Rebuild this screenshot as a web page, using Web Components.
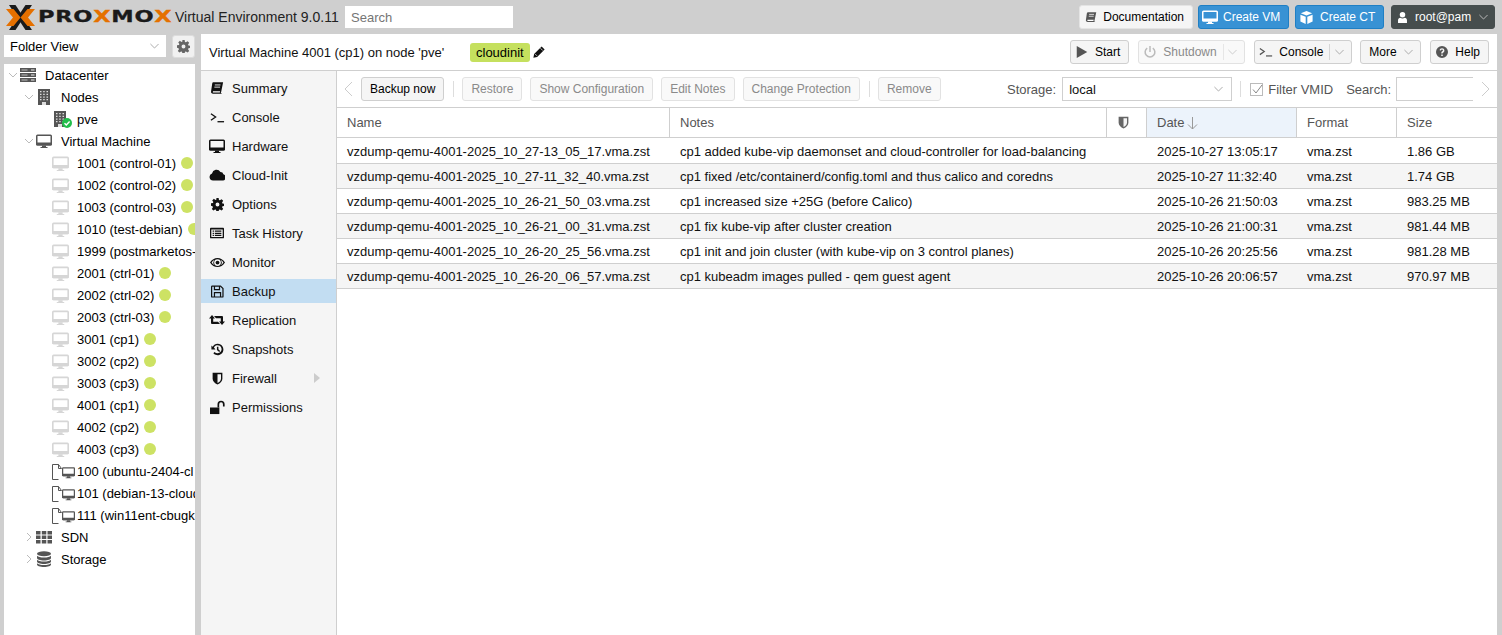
<!DOCTYPE html>
<html>
<head>
<meta charset="utf-8">
<title>Proxmox VE</title>
<style>
  html, body { margin: 0; height: 100%; overflow: hidden; }
  body { background: #cfcfcf; font: 13px "Liberation Sans", Arial, sans-serif; color: #000; }
</style>
</head>
<body>
<pve-app></pve-app>
<script>
const ICONS = {
  book: '<path d="M4 1.500h11l-2.200 10.800-.5 1.200 1.400 1H3.500C1.800 14.500 1 13.500 1.200 12L2.500 3C2.700 2 3.200 1.500 4 1.500z"/><path d="M3.400 11.800h8.200l-.4 1.400H3.200z" fill="#fff"/><path d="M5.500 4.500h6.500M5 7h6.500" stroke="#fff" fill="none"/>',
  term: '<path d="M1 4l5 3.500-5 3.500" fill="none" stroke="currentColor" stroke-width="1.400"/><path d="M8 12.500h7" stroke="currentColor" stroke-width="1.400"/>',
  desktop: '<path d="M1.500 1.500h13A1.500 1.500 0 0 1 16 3v8a1.500 1.500 0 0 1-1.500 1.500h-13A1.500 1.500 0 0 1 0 11V3a1.500 1.500 0 0 1 1.500-1.500zM1.500 3v7.500h13V3z" fill-rule="evenodd"/><path d="M0 9.500h16V11a1.500 1.500 0 0 1-1.500 1.500h-13A1.500 1.500 0 0 1 0 11z"/><path d="M6 12.500h4v1.500h1.500v1h-7v-1H6z"/>',
  cloud: '<path d="M4 13.500a3.600 3.600 0 0 1-1-7 4.600 4.600 0 0 1 8.400-1.600 3 3 0 0 1 3 2.400 3.200 3.200 0 0 1-.4 6.200z"/>',
  gear: '<path fill-rule="evenodd" d="M6.600 0h2.800l.4 2.400 1.200.5 2-1.400 2 2-1.400 2 .5 1.200 2.400.4v2.800l-2.400.4-.5 1.200 1.400 2-2 2-2-1.400-1.200.5-.4 2.400H6.600l-.4-2.400-1.200-.5-2 1.400-2-2 1.400-2-.5-1.200L0 9.400V6.600l2.400-.4.5-1.200-1.400-2 2-2 2 1.400 1.200-.5zM8 5.600a2.400 2.400 0 1 0 0 4.800 2.400 2.400 0 0 0 0-4.800z"/>',
  list: '<path fill-rule="evenodd" d="M1 2h14a1 1 0 0 1 1 1v10a1 1 0 0 1-1 1H1a1 1 0 0 1-1-1V3a1 1 0 0 1 1-1zm.500 2v8.500h13V4z"/><path d="M3 5.200h1.500v1.400H3zM3 7.600h1.500v1.400H3zM3 10h1.500v1.400H3zM5.500 5.200H13v1.400H5.500zM5.500 7.600H13v1.400H5.500zM5.500 10H13v1.400H5.500z"/>',
  eye: '<path fill-rule="evenodd" d="M0 8c2-3.200 4.800-4.800 8-4.800S14 4.800 16 8c-2 3.200-4.800 4.800-8 4.800S2 11.200 0 8zm8-3.600a3.600 3.600 0 1 0 0 7.200 3.600 3.600 0 0 0 0-7.200zM1.700 8c.8 1.200 1.700 2 2.700 2.700A5 5 0 0 1 4.400 5.300C3.400 6 2.500 6.800 1.700 8zm10-2.700a5 5 0 0 1 0 5.400c1-.7 1.900-1.500 2.600-2.700-.7-1.200-1.600-2-2.600-2.700z"/><circle cx="8" cy="8" r="2"/>',
  save: '<path fill-rule="evenodd" d="M1.500 0.500h10.500l3.500 3.500v10a1.500 1.500 0 0 1-1.500 1.500H1.500A1.500 1.500 0 0 1 0 14V2a1.500 1.500 0 0 1 1.500-1.500zm0 1.500V14h12.500V4.700L11.500 2h-.3v4.500H3.500V2zm3.500 0v3h4.700V2zM3.500 8.500h9V14H11V10H5v4H3.500z"/>',
  retweet: '<path d="M0 6.500L3 3l3 3.500H4.200v3.300H9l2 2.200H3a1 1 0 0 1-1-1V6.500z"/><path d="M16 9.500L13 13l-3-3.500h1.800V6.200H7L5 4h8a1 1 0 0 1 1 1v4.500z"/>',
  history: '<path d="M8.300 1a7 7 0 1 1-5.400 11.500l1.500-1.400a5 5 0 1 0-.8-5.700L5.500 8H.5V3l1.600 1.600A7 7 0 0 1 8.300 1z"/><path d="M7.300 4.500h1.800v3.300l2.200 2-1.200 1.300-2.800-2.600z"/>',
  shield: '<path d="M2 1h12v7c0 3.500-2.500 5.800-6 7.500C4.500 13.800 2 11.500 2 8z"/><path d="M8 2.800h4.300V8c0 2.600-1.800 4.300-4.300 5.600z" fill="#f5f5f5"/>',
  unlock: '<path d="M0 8h10v7H0z"/><path d="M7 8V4.500a3.800 3.800 0 0 1 7.600 0V7h-1.800V4.500a2 2 0 0 0-4 0V8z" transform="translate(1 0)"/>',
  question: '<path fill-rule="evenodd" d="M8 0a8 8 0 1 1 0 16A8 8 0 0 1 8 0zM7 11.300v2h2v-2zM8 3c-1.800 0-3 1-3.200 2.700l1.800.3c.1-.8.600-1.300 1.400-1.300s1.300.4 1.300 1.100c0 .5-.3.800-1 1.300-.9.600-1.300 1.200-1.300 2.200v.7h1.900v-.3c0-.5.200-.7.900-1.200 1-.7 1.400-1.400 1.400-2.300C11 4.100 9.800 3 8 3z"/>',
  cube: '<path d="M8 0l7 2.800L8 5.600 1 2.800z"/><path d="M.5 4.500l6.500 2.600V16l-6.500-3zM15.500 4.500L9 7.100V16l6.500-3z"/>',
  user: '<circle cx="8" cy="4" r="4"/><path d="M1.500 16v-4c0-2 1.500-3.500 3.300-3.500.9.700 2 1 3.200 1s2.300-.3 3.200-1c1.800 0 3.300 1.500 3.300 3.500v4z"/>',
  play: '<path d="M1 0l14 8-14 8z"/>',
  power: '<path d="M8 0v8" fill="none" stroke="currentColor" stroke-width="2"/><path d="M4.300 2.800a6.500 6.500 0 1 0 7.400 0" fill="none" stroke="currentColor" stroke-width="2"/>',
  pencil: '<path d="M11.500.5l4 4-10 10-5 1 1-5z"/><path d="M3 10.800l2.200 2.200" stroke="#fff"/><path d="M10 3l3 3" stroke="#fff"/>',
  server: '<path d="M0 1h16v4H0zM0 6h16v4H0zM0 11h16v4H0z"/><path d="M1.500 2.500h6v1h-6zM1.500 7.500h6v1h-6zM1.500 12.500h6v1h-6z" fill="#bbb"/><path d="M11 2.500h3.500v1H11zM11 7.500h3.500v1H11zM11 12.500h3.500v1H11z" fill="#eee"/>',
  building: '<path d="M2 0h12v16H2z" fill="#555"/><path d="M4 2h1.500v1.300H4zM7.200 2h1.500v1.300H7.200zM10.500 2H12v1.300h-1.500zM4 4.700h1.500V6H4zM7.200 4.700h1.500V6H7.200zM10.500 4.700H12V6h-1.500zM4 7.400h1.500v1.300H4zM7.200 7.400h1.500v1.300H7.200zM10.500 7.400H12v1.300h-1.500zM4 10h1.500v1.300H4zM7.200 10h1.500v1.300H7.200zM10.500 10H12v1.300h-1.500zM6 13h4v3H6z" fill="#ddd"/>',
  grid: '<path d="M0 2h4.500v3.500H0zM5.800 2h4.500v3.500H5.800zM11.500 2H16v3.500h-4.500zM0 6.500h4.500V10H0zM5.800 6.500h4.500V10H5.800zM11.500 6.500H16V10h-4.500zM0 11h4.500v3.500H0zM5.800 11h4.500v3.500H5.800zM11.500 11H16v3.500h-4.500z"/>',
  database: '<ellipse cx="8" cy="2.800" rx="7" ry="2.500"/><path d="M1 4.700c1 1.200 3.500 1.800 7 1.800s6-.6 7-1.800V7c0 1.400-3 2.500-7 2.500S1 8.400 1 7z"/><path d="M1 8.700c1 1.200 3.500 1.800 7 1.800s6-.6 7-1.800V10.500c0 1.400-3 2.500-7 2.500s-7-1.100-7-2.500z"/><path d="M1 12.200c1 1.200 3.500 1.800 7 1.800s6-.6 7-1.800V13.500c0 1.400-3 2.500-7 2.500s-7-1.100-7-2.500z"/>'
};

function svg(name, size, color) {
  return `<svg viewBox="0 0 16 16" width="${size}" height="${size}" fill="${color || 'currentColor'}" style="color:${color || 'currentColor'};display:block;flex:none">${ICONS[name]}</svg>`;
}
const chevDown = (c, cls) => `<svg class="${cls || ''}" viewBox="0 0 11 7" width="9" height="6" style="display:block;flex:none"><path d="M.5 1l5 5 5-5" fill="none" stroke="${c || '#999'}" stroke-width="1.200"/></svg>`;

class PveBtn extends HTMLElement {
  connectedCallback() {
    const icon = this.getAttribute('icon');
    const size = this.getAttribute('size') || 14;
    const split = this.hasAttribute('split');
    const arrow = this.hasAttribute('arrow');
    const off = this.hasAttribute('off');
    const kind = this.getAttribute('kind') || '';
    const iconColor = { blue: '#fff', dark: '#fff' }[kind] || (off ? '#bbb' : '#555');
    this.attachShadow({ mode: 'open' });
    this.shadowRoot.innerHTML = `
      <style>
        :host { display: inline-flex; box-sizing: border-box; height: 24px; align-items: center; border: 1px solid #cfcfcf; border-radius: 3px; background: #f5f5f5; color: #000; padding: 0 var(--pr, 8px) 0 var(--pl, 8px); font-size: 12px; white-space: nowrap; flex: none; }
        :host([off]) { color: #8a8a8a; border-color: #e2e2e2; background: #f9f9f9; }
        :host([kind=blue]) { background: #3892d4; border-color: #1f7fc4; color: #fff; }
        :host([kind=dark]) { background: #464d4d; border-color: #464d4d; color: #fff; }
        :host([kind=plain]) { border-color: #e4e4e4; background: #f5f5f5; }
        .ic { margin-right: var(--ig, 6px); flex: none; display: block; }
        .sep { width: 1px; height: 16px; background: #d6d6d6; margin-left: 6px; margin-right: -1px; }
        :host([off]) .sep { background: #e6e6e6; }
        .ch { margin-left: var(--cg, 6px); }
      </style>
      ${icon ? `<span class="ic">${svg(icon, size, iconColor)}</span>` : ''}<span><slot></slot></span>${split ? '<i class="sep"></i>' : ''}${split || arrow ? chevDown(kind === 'dark' ? '#bbb' : (off ? '#ccc' : '#aaa'), 'ch') : ''}
    `;
  }
}
customElements.define('pve-btn', PveBtn);

class PveHeader extends HTMLElement {
  connectedCallback() {
    this.attachShadow({ mode: 'open' });
    this.shadowRoot.innerHTML = `
      <style>
        :host { display: flex; align-items: center; height: 34px; box-sizing: border-box; padding: 0 7px 0 5px; flex: none; }
        .logo { width: 165px; height: 27px; flex: none; display: flex; align-items: center; }
        .word { font: bold 15px "DejaVu Sans", sans-serif; color: #1a1a1a; transform: scaleX(1.5); transform-origin: left center; letter-spacing: .5px; margin-left: 3px; white-space: nowrap; -webkit-text-stroke: .3px currentColor; }
        .word b { color: #e57000; }
        .ver { font-size: 14px; color: #222; margin-left: 5px; width: 170px; white-space: nowrap; }
        .search { width: 168px; height: 22px; background: #fff; box-sizing: border-box; color: #757575; padding: 0 6px; line-height: 23px; font-size: 13px; flex: none; }
        .right { margin-left: auto; display: flex; }
      </style>
      <div class="logo">
        <svg width="29" height="25" viewBox="0 0 29 25" style="flex:none;margin-left:1px">
          <path d="M3 0h6.500L26 25h-6.500z" fill="#1a1a1a"/>
          <path d="M26 0h-6.500L3 25h6.500z" fill="#1a1a1a"/>
          <path d="M0 4h7.500l7 8.500-7 8.500H0l7-8.500z" fill="#e57000"/>
          <path d="M29 4h-7.500l-7 8.500 7 8.500H29l-7-8.500z" fill="#e57000"/>
        </svg>
        <span class="word">PRO<b>X</b>MO<b>X</b></span>
      </div>
      <span class="ver">Virtual Environment 9.0.11</span>
      <div class="search">Search</div>
      <div class="right">
        <pve-btn icon="book" size="12" kind="plain" style="--pl:5px;--pr:8px;--ig:6px">Documentation</pve-btn>
        <pve-btn icon="desktop" size="16" kind="blue" style="margin-left:5px;--pl:3px;--pr:6px;--ig:5px;width:91px">Create VM</pve-btn>
        <pve-btn icon="cube" size="13" kind="blue" style="margin-left:6px;--pl:4px;--pr:6px;--ig:7px;width:89px">Create CT</pve-btn>
        <pve-btn icon="user" size="11" kind="dark" arrow style="margin-left:7px;--pl:5px;--pr:4px;--ig:7px;--cg:8px;width:104px">root@pam</pve-btn>
      </div>
    `;
  }
}
customElements.define('pve-header', PveHeader);

class PveNode extends HTMLElement {
  connectedCallback() {
    const depth = +this.getAttribute('depth');
    const twist = this.getAttribute('twist');
    const icon = this.getAttribute('icon');
    const gap = this.getAttribute('gap') || '10';
    const dot = this.hasAttribute('dot');
    const pad = 4 + depth * 16 + (depth === 2 ? 1 : 0);
    let iconHtml = '';
    if (icon === 'vm') {
      iconHtml = svg('desktop', 17, '#d6d6d6');
    } else if (icon === 'node') {
      iconHtml = `<span class="ov">${svg('building', 16, '#555')}<svg class="ok" viewBox="0 0 10 10" width="10" height="10"><circle cx="5" cy="5" r="5" fill="#21bf4b"/><path d="M2.500 5.200l1.800 1.800 3.300-3.500" fill="none" stroke="#fff" stroke-width="1.400"/></svg></span>`;
    } else if (icon === 'tpl') {
      iconHtml = `<span class="ov tpl"><svg viewBox="0 0 12 16" width="12" height="16" fill="none" stroke="#555" style="display:block"><path d="M.5 15.500V.5h6l3 4"/><path d="M6.500.5v4h3"/><path d="M.5 15.500h6"/></svg><span class="tm">${svg('desktop', 13, '#555')}</span></span>`;
    } else if (icon) {
      iconHtml = svg(icon, 16, '#555');
    }
    const tw = twist === 'open' ? '<path d="M1 3l4 4 4-4"/>' : twist === 'closed' ? '<path d="M3 1l4 4-4 4"/>' : '';
    this.attachShadow({ mode: 'open' });
    this.shadowRoot.innerHTML = `
      <style>
        :host { display: flex; align-items: center; height: 22px; white-space: nowrap; padding-left: ${pad}px; overflow: hidden; }
        .tw { width: 10px; height: 10px; flex: none; margin-right: 1px; fill: none; stroke: #bbb; }
        .i { width: 17px; display: flex; justify-content: center; flex: none; margin-right: ${gap}px; }
        .ov { position: relative; display: block; width: 16px; height: 16px; margin-left: -2px; }
        .ok { position: absolute; right: -4px; bottom: -1px; }
        .tpl { flex: none; align-self: flex-start; width: 22px; margin: 1px 0 0 0; position: relative; left: 2.500px; }
        .tm { position: absolute; left: 10px; top: 2px; }
        .dot { width: 12px; height: 12px; border-radius: 50%; background: #cde264; margin-left: 5px; flex: none; }
      </style>
      <svg class="tw" viewBox="0 0 10 10">${tw}</svg>
      <span class="i">${iconHtml}</span>
      <span><slot></slot></span>${dot ? '<span class="dot"></span>' : ''}
    `;
  }
}
customElements.define('pve-node', PveNode);

class PveSidebar extends HTMLElement {
  connectedCallback() {
    const vm = (t) => `<pve-node depth="2" icon="vm" gap="8" dot>${t}</pve-node>`;
    const tpl = (t) => `<pve-node depth="2" icon="tpl" gap="8">${t}</pve-node>`;
    this.attachShadow({ mode: 'open' });
    this.shadowRoot.innerHTML = `
      <style>
        :host { display: flex; flex-direction: column; width: 191px; margin-left: 4px; flex: none; }
        .top { display: flex; justify-content: space-between; height: 23px; flex: none; }
        .view { width: 162px; background: #fff; box-sizing: border-box; display: flex; align-items: center; justify-content: space-between; padding: 0 7px 0 6px; height: 22px; }
        .gear { width: 23px; height: 23px; box-sizing: border-box; background: #f1f1f1; border: 1px solid #dcdcdc; border-radius: 3px; display: flex; align-items: center; justify-content: center; }
        .tree { margin-top: 6px; background: #fff; flex: 1; overflow: hidden; min-height: 0; }
      </style>
      <div class="top">
        <div class="view"><span>Folder View</span>${chevDown('#aaa')}</div>
        <div class="gear">${svg('gear', 13, '#666')}</div>
      </div>
      <div class="tree">
        <pve-node depth="0" twist="open" icon="server" gap="9">Datacenter</pve-node>
        <pve-node depth="1" twist="open" icon="building" gap="9">Nodes</pve-node>
        <pve-node depth="2" icon="node" gap="8">pve</pve-node>
        <pve-node depth="1" twist="open" icon="desktop" gap="9">Virtual Machine</pve-node>
        ${['1001 (control-01)', '1002 (control-02)', '1003 (control-03)', '1010 (test-debian)', '1999 (postmarketos-'].map((t, i) => i === 4 ? `<pve-node depth="2" icon="vm" gap="8">${t}</pve-node>` : vm(t)).join('')}
        ${['2001 (ctrl-01)', '2002 (ctrl-02)', '2003 (ctrl-03)', '3001 (cp1)', '3002 (cp2)', '3003 (cp3)', '4001 (cp1)', '4002 (cp2)', '4003 (cp3)'].map(vm).join('')}
        ${['100 (ubuntu-2404-cl', '101 (debian-13-cloud', '111 (win11ent-cbugk'].map(tpl).join('')}
        <pve-node depth="1" twist="closed" icon="grid" gap="9">SDN</pve-node>
        <pve-node depth="1" twist="closed" icon="database" gap="9">Storage</pve-node>
      </div>
    `;
  }
}
customElements.define('pve-sidebar', PveSidebar);

class PveTabs extends HTMLElement {
  connectedCallback() {
    const items = [['book', 'Summary', 14], ['term', 'Console', 15], ['desktop', 'Hardware', 16], ['cloud', 'Cloud-Init', 16], ['gear', 'Options', 13], ['list', 'Task History', 14], ['eye', 'Monitor', 15], ['save', 'Backup', 13], ['retweet', 'Replication', 16], ['history', 'Snapshots', 13], ['shield', 'Firewall', 13], ['unlock', 'Permissions', 15]];
    this.attachShadow({ mode: 'open' });
    this.shadowRoot.innerHTML = `
      <style>
        :host { display: block; width: 136px; box-sizing: border-box; background: #f5f5f5; border-right: 1px solid #cfcfcf; flex: none; padding-top: 5px; }
        .t { display: flex; align-items: center; height: 24px; margin-bottom: 5px; padding-left: 8px; gap: 7px; color: #111; position: relative; }
        .t.sel { background: #c2ddf2; }
        .w { width: 16px; display: flex; justify-content: center; flex: none; }
        .car { position: absolute; left: 113px; top: 7px; width: 0; height: 0; border-left: 6px solid #ccc; border-top: 5px solid transparent; border-bottom: 5px solid transparent; }
      </style>
      ${items.map(([ic, label, sz]) => `<div class="t${label === 'Backup' ? ' sel' : ''}"><span class="w">${svg(ic, sz, '#111')}</span><span>${label}</span>${label === 'Firewall' ? '<i class="car"></i>' : ''}</div>`).join('')}
    `;
  }
}
customElements.define('pve-tabs', PveTabs);

class PveTitlebar extends HTMLElement {
  connectedCallback() {
    this.attachShadow({ mode: 'open' });
    this.shadowRoot.innerHTML = `
      <style>
        :host { display: flex; align-items: center; height: 37px; box-sizing: border-box; background: #fff; border-bottom: 1px solid #cfcfcf; padding: 0 8px; flex: none; }
        .title { width: 261px; flex: none; color: #111; white-space: nowrap; }
        .tag { background: #c5e05e; border-radius: 3px; height: 19px; line-height: 19px; padding: 0 6px; flex: none; }
        .edit { margin-left: 3px; }
        .right { margin-left: auto; display: flex; gap: 9px; }
      </style>
      <span class="title">Virtual Machine 4001 (cp1) on node 'pve'</span>
      <span class="tag">cloudinit</span>
      <span class="edit">${svg('pencil', 12, '#111')}</span>
      <div class="right">
        <pve-btn icon="play" size="12" style="--pl:5px;--ig:7px;--pr:8px">Start</pve-btn>
        <pve-btn icon="power" size="12" off split style="--pl:5px;--ig:7px;--pr:7px;--cg:5px;width:107px">Shutdown</pve-btn>
        <pve-btn icon="term" size="14" split style="--pl:4px;--ig:6px;--pr:7px;--cg:6px;width:98px">Console</pve-btn>
        <pve-btn arrow style="--pl:8px;--pr:8px;--cg:7px;margin-left:-1px;width:61px">More</pve-btn>
        <pve-btn icon="question" size="12" style="--pl:5px;--ig:7px;--pr:8px">Help</pve-btn>
      </div>
    `;
  }
}
customElements.define('pve-titlebar', PveTitlebar);

class PveToolbar extends HTMLElement {
  connectedCallback() {
    const arrow = (d) => `<svg viewBox="0 0 9 16" width="9" height="16" style="display:block;flex:none"><path d="${d}" fill="none" stroke="#ccc"/></svg>`;
    this.attachShadow({ mode: 'open' });
    this.shadowRoot.innerHTML = `
      <style>
        :host { display: flex; align-items: center; height: 37px; box-sizing: border-box; border-bottom: 1px solid #cfcfcf; padding: 0 7px; flex: none; gap: 8px; color: #111; }
        .sep { width: 1px; height: 16px; background: #ddd; flex: none; margin-left: 1px; }
        .lab { color: #555; white-space: nowrap; }
        .combo { width: 170px; height: 24px; box-sizing: border-box; border: 1px solid #cfcfcf; display: flex; align-items: center; justify-content: space-between; padding: 0 8px 0 6px; background: #fff; flex: none; }
        .chk { display: flex; align-items: center; gap: 5px; color: #555; white-space: nowrap; margin-left: 1px; }
        .box { width: 13px; height: 13px; border: 1px solid #bbb; box-sizing: border-box; position: relative; flex: none; }
        .box svg { position: absolute; left: 0; top: -1px; }
        .search { width: 77px; height: 24px; box-sizing: border-box; border: 1px solid #cfcfcf; border-right: 0; flex: none; }
        .spacer { flex: 1; }
      </style>
      ${arrow('M8 1L1 8l7 7')}
      <pve-btn>Backup now</pve-btn>
      <i class="sep"></i>
      <pve-btn off>Restore</pve-btn>
      <pve-btn off>Show Configuration</pve-btn>
      <pve-btn off>Edit Notes</pve-btn>
      <pve-btn off>Change Protection</pve-btn>
      <i class="sep"></i>
      <pve-btn off>Remove</pve-btn>
      <span class="spacer"></span>
      <span class="lab" style="margin-right:-2px">Storage:</span>
      <div class="combo"><span>local</span>${chevDown('#aaa')}</div>
      <i class="sep" style="margin-left:0"></i>
      <span class="chk"><span class="box"><svg viewBox="0 0 13 13" width="13" height="13"><path d="M2 6.500l3 3.500 6-8" fill="none" stroke="#888"/></svg></span>Filter VMID</span>
      <span class="lab" style="margin-left:5px;margin-right:-3px">Search:</span>
      <div class="search"></div>
      ${arrow('M1 1l7 7-7 7')}
    `;
  }
}
customElements.define('pve-toolbar', PveToolbar);

class PveGrid extends HTMLElement {
  connectedCallback() {
    const rows = [
      ['vzdump-qemu-4001-2025_10_27-13_05_17.vma.zst', 'cp1 added kube-vip daemonset and cloud-controller for load-balancing', '2025-10-27 13:05:17', '1.86 GB'],
      ['vzdump-qemu-4001-2025_10_27-11_32_40.vma.zst', 'cp1 fixed /etc/containerd/config.toml and thus calico and coredns', '2025-10-27 11:32:40', '1.74 GB'],
      ['vzdump-qemu-4001-2025_10_26-21_50_03.vma.zst', 'cp1 increased size +25G (before Calico)', '2025-10-26 21:50:03', '983.25 MB'],
      ['vzdump-qemu-4001-2025_10_26-21_00_31.vma.zst', 'cp1 fix kube-vip after cluster creation', '2025-10-26 21:00:31', '981.44 MB'],
      ['vzdump-qemu-4001-2025_10_26-20_25_56.vma.zst', 'cp1 init and join cluster (with kube-vip on 3 control planes)', '2025-10-26 20:25:56', '981.28 MB'],
      ['vzdump-qemu-4001-2025_10_26-20_06_57.vma.zst', 'cp1 kubeadm images pulled - qem guest agent', '2025-10-26 20:06:57', '970.97 MB']
    ];
    const cols = '333px 437px 40px 150px 100px 100px';
    this.attachShadow({ mode: 'open' });
    this.shadowRoot.innerHTML = `
      <style>
        :host { display: block; flex: 1; min-height: 0; overflow: hidden; }
        .rows { padding-top: 1px; }
        .r { display: grid; grid-template-columns: ${cols}; box-sizing: border-box; height: 25px; border-bottom: 1px solid #cfcfcf; align-items: center; }
        .r:nth-child(even) { background: #f5f5f5; }
        .r > span { padding-left: 10px; white-space: nowrap; overflow: hidden; color: #111; }
        .h { display: grid; grid-template-columns: ${cols}; height: 30px; box-sizing: border-box; border-bottom: 1px solid #cfcfcf; background: #fff; }
        .h > span { display: flex; align-items: center; padding-left: 10px; border-right: 1px solid #cfcfcf; color: #555; gap: 3px; box-sizing: border-box; }
        .h > span:last-child { border-right: 0; }
        .h > .act { background: #ecf3fb; }
      </style>
      <div class="h">
        <span>Name</span><span>Notes</span><span>${svg('shield', 13, '#666')}</span>
        <span class="act">Date <svg viewBox="0 0 11 14" width="11" height="14" style="display:block;flex:none"><path d="M5.500 1v12M1 8.500l4.500 4.500 4.500-4.500" fill="none" stroke="#999"/></svg></span>
        <span>Format</span><span>Size</span>
      </div>
      <div class="rows">
        ${rows.map(r => `<div class="r"><span>${r[0]}</span><span>${r[1]}</span><span></span><span>${r[2]}</span><span>vma.zst</span><span>${r[3]}</span></div>`).join('')}
      </div>
    `;
  }
}
customElements.define('pve-grid', PveGrid);

class PveApp extends HTMLElement {
  connectedCallback() {
    this.attachShadow({ mode: 'open' });
    this.shadowRoot.innerHTML = `
      <style>
        :host { display: flex; flex-direction: column; height: 635px; width: 1502px; overflow: hidden; }
        .body { display: flex; flex: 1; min-height: 0; padding-top: 1px; }
        .main { margin-left: 6px; width: 1296px; flex: none; background: #fff; display: flex; flex-direction: column; min-height: 0; margin-top: -1px; }
        .lower { display: flex; flex: 1; min-height: 0; }
        .content { flex: 1; min-width: 0; display: flex; flex-direction: column; }
      </style>
      <pve-header></pve-header>
      <div class="body">
        <pve-sidebar></pve-sidebar>
        <div class="main">
          <pve-titlebar></pve-titlebar>
          <div class="lower">
            <pve-tabs></pve-tabs>
            <div class="content">
              <pve-toolbar></pve-toolbar>
              <pve-grid></pve-grid>
            </div>
          </div>
        </div>
      </div>
    `;
  }
}
customElements.define('pve-app', PveApp);
</script>
</body>
</html>
